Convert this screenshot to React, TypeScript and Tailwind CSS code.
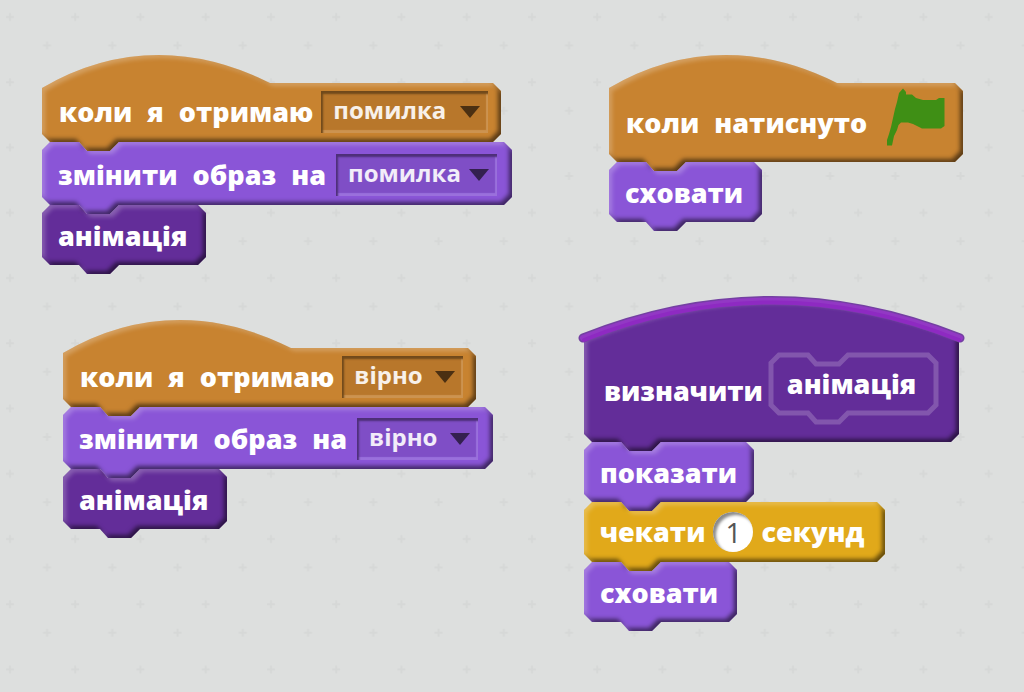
import React from "react";

type Tone = "orange" | "violet" | "indigo" | "gold";
type Shape = "hat" | "stack" | "define";

const FILL: Record<Tone, string> = {
  orange: "#c88330",
  violet: "#8a55d7",
  indigo: "#632d99",
  gold: "#e1a91a",
};

const SELECT_TONE = {
  orange: "bg-[#b8772b] shadow-[inset_3px_4px_2px_-1px_#70491b,inset_-3px_-4px_1px_-1px_#cc9350]",
  violet: "bg-[#7f4ec6] shadow-[inset_3px_4px_2px_-1px_#4d2f78,inset_-3px_-4px_1px_-1px_#9a70dc]",
};

const ARROW = { orange: "fill-[#4b3012]", violet: "fill-[#33204f]" };

function bottomEdge(w: number, h: number) {
  return `V${h - 8} L${w - 8} ${h} H77 L68 ${h + 9} H45 L37 ${h} H8 L0 ${h - 8} Z`;
}

function outline(shape: Shape, w: number, h: number) {
  if (shape === "hat") {
    return `M0 33 Q56 0 117 0 Q172 0 228 28 H${w - 8} L${w} 36 ${bottomEdge(w, h)}`;
  }
  if (shape === "define") {
    return `M0 42 Q${w / 2} -33 ${w} 42 ${bottomEdge(w, h)}`;
  }
  return `M0 8 L8 0 H37 L45 9 H68 L77 0 H${w - 8} L${w} 8 ${bottomEdge(w, h)}`;
}

function Bevels() {
  return (
    <svg className="absolute size-0" aria-hidden="true">
      <defs>
        <filter id="bevel" x="-5%" y="-10%" width="110%" height="130%" colorInterpolationFilters="sRGB">
          <feComponentTransfer in="SourceAlpha" result="outside">
            <feFuncA type="table" tableValues="1 0" />
          </feComponentTransfer>
          <feGaussianBlur in="outside" stdDeviation="2.2" result="soft" />
          <feOffset in="soft" dx="-3" dy="-3" result="low" />
          <feFlood floodColor="#000" floodOpacity="0.55" />
          <feComposite in2="low" operator="in" result="shadeAll" />
          <feOffset in="soft" dx="3" dy="3" result="high" />
          <feComposite in="shadeAll" in2="high" operator="out" result="shadeOnly" />
          <feComposite in="shadeOnly" in2="SourceAlpha" operator="in" result="shade" />
          <feFlood floodColor="#fff" floodOpacity="0.24" />
          <feComposite in2="high" operator="in" result="lightAll" />
          <feComposite in="lightAll" in2="low" operator="out" result="lightOnly" />
          <feComposite in="lightOnly" in2="SourceAlpha" operator="in" result="light" />
          <feMerge>
            <feMergeNode in="SourceGraphic" />
            <feMergeNode in="light" />
            <feMergeNode in="shade" />
          </feMerge>
        </filter>
      </defs>
    </svg>
  );
}

function Block({
  tone,
  shape = "stack",
  w,
  h,
  size,
  children,
}: {
  tone: Tone;
  shape?: Shape;
  w: number;
  h: number;
  size: string;
  children: React.ReactNode;
}) {
  return (
    <div className={`relative flex items-center ${size}`}>
      <svg
        className="absolute left-0 top-0 overflow-visible"
        width={w}
        height={h}
        viewBox={`0 0 ${w} ${h}`}
        aria-hidden="true"
      >
        <path d={outline(shape, w, h)} fill={FILL[tone]} filter="url(#bevel)" />
        {shape === "define" && (
          <g fill="none" strokeLinecap="round">
            <path d={`M-1 42 Q${w / 2} -33 ${w + 1} 42`} stroke="#7440a2" strokeWidth="9" />
            <path d={`M-1 42 Q${w / 2} -33 ${w + 1} 42`} stroke="#9238c4" strokeWidth="6" />
            <path d={`M0 44 Q${w / 2} -31 ${w} 44`} stroke="#8e2ac2" strokeWidth="4" />
          </g>
        )}
      </svg>
      {children}
    </div>
  );
}

function Words({ text }: { text: string }) {
  return (
    <span className="relative flex gap-[15px] whitespace-nowrap">
      {text.split(" ").map((word) => (
        <span key={word}>{word}</span>
      ))}
    </span>
  );
}

function Choice({ tone, value, size, label }: { tone: "orange" | "violet"; value: string; size: string; label: string }) {
  return (
    <span className={`relative flex h-[42px] items-center ${size}`}>
      <select
        aria-label={label}
        defaultValue={value}
        className={`h-full w-full appearance-none pb-1 pl-3 text-2xl font-bold text-white/90 outline-none ${SELECT_TONE[tone]}`}
      >
        <option>{value}</option>
      </select>
      <svg className={`pointer-events-none absolute right-2 h-3 w-5 ${ARROW[tone]}`} viewBox="0 0 20 12" aria-hidden="true">
        <path d="M0 0H20L10 12Z" />
      </svg>
    </span>
  );
}

function Flag() {
  return (
    <svg className="mb-3 ml-3 h-[58px] w-[58px] shrink-0 relative" viewBox="884 88 58 58" aria-hidden="true">
      <path
        fill="#3f8f15"
        d="M900 88.500L903 92V94.500H909L913 98L920 100H933L936 98H941.500V126L938 128.500H919L910 124L905 122.500H898L895.500 125L894 130L891 136L889 145.500H884V140L886 134L888 127L890 118L892 109L894 102L896 93Z"
      />
    </svg>
  );
}

function Dots() {
  return (
    <svg className="absolute inset-0 h-full w-full" aria-hidden="true">
      <defs>
        <pattern id="crosses" width="65.25" height="65.25" x="0" y="0" patternUnits="userSpaceOnUse">
          <path
            d="M43 45.500H51M47 41.500V49.500M6 17H14M10 13V21"
            stroke="#d6d8d7"
            strokeWidth="2"
          />
        </pattern>
      </defs>
      <rect width="100%" height="100%" fill="url(#crosses)" />
    </svg>
  );
}

export default function App() {
  return (
    <main className="relative min-h-screen w-full overflow-hidden bg-[#dddfde] font-['Open_Sans','Noto_Sans',sans-serif] text-[27px] leading-8 font-extrabold text-white">
      <Bevels />
      <Dots />

      <section className="absolute left-[42px] top-[55px] flex flex-col items-start">
        <Block tone="orange" shape="hat" w={459} h={87} size="h-[87px] w-[459px] gap-2 pt-[26px] pl-[17px]">
          <Words text="коли я отримаю" />
          <Choice tone="orange" value="помилка" size="w-[167px]" label="Повідомлення" />
        </Block>
        <Block tone="violet" w={470} h={63} size="h-[63px] w-[470px] gap-2.5 pl-4 pt-0.5">
          <Words text="змінити образ на" />
          <Choice tone="violet" value="помилка" size="w-[161px]" label="Образ" />
        </Block>
        <Block tone="indigo" w={164} h={60} size="h-[60px] w-[164px] pl-4 pt-0.5">
          <Words text="анімація" />
        </Block>
      </section>

      <section className="absolute left-[63px] top-[320px] flex flex-col items-start">
        <Block tone="orange" shape="hat" w={413} h={87} size="h-[87px] w-[413px] gap-2 pt-[26px] pl-[17px]">
          <Words text="коли я отримаю" />
          <Choice tone="orange" value="вірно" size="w-[121px]" label="Повідомлення" />
        </Block>
        <Block tone="violet" w={430} h={62} size="h-[62px] w-[430px] gap-2.5 pl-4 pt-0.5">
          <Words text="змінити образ на" />
          <Choice tone="violet" value="вірно" size="w-[121px]" label="Образ" />
        </Block>
        <Block tone="indigo" w={164} h={60} size="h-[60px] w-[164px] pl-4 pt-0.5">
          <Words text="анімація" />
        </Block>
      </section>

      <section className="absolute left-[609px] top-[55px] flex flex-col items-start">
        <Block tone="orange" shape="hat" w={354} h={107} size="h-[107px] w-[354px] gap-2 pt-7 pl-[17px]">
          <Words text="коли натиснуто" />
          <Flag />
        </Block>
        <Block tone="violet" w={153} h={60} size="h-[60px] w-[153px] pl-4 pt-0.5">
          <Words text="сховати" />
        </Block>
      </section>

      <section className="absolute left-[584px] top-[296px] flex flex-col items-start">
        <Block tone="indigo" shape="define" w={375} h={146} size="h-[146px] w-[375px] gap-2 pt-11 pl-5">
          <Words text="визначити" />
          <span className="relative mb-2 flex h-[64px] w-[170px] items-center pb-1.5 pl-4">
            <svg className="absolute left-0 top-0 overflow-visible" width="170" height="64" viewBox="0 0 170 64" aria-hidden="true">
              <path
                d={outline("stack", 165, 58)}
                fill="none"
                stroke="#8256ad"
                strokeWidth="5"
              />
            </svg>
            <Words text="анімація" />
          </span>
        </Block>
        <Block tone="violet" w={170} h={60} size="h-[60px] w-[170px] pl-4 pt-0.5">
          <Words text="показати" />
        </Block>
        <Block tone="gold" w={301} h={60} size="h-[60px] w-[301px] gap-2 pl-4">
          <Words text="чекати" />
          <input
            aria-label="Секунди"
            defaultValue="1"
            className="relative size-10 rounded-full bg-white text-center text-[28px] font-normal text-[#555] shadow-[inset_3px_3px_3px_#8a8a8a] outline-none"
          />
          <Words text="секунд" />
        </Block>
        <Block tone="violet" w={153} h={60} size="h-[60px] w-[153px] pl-4 pt-0.5">
          <Words text="сховати" />
        </Block>
      </section>
    </main>
  );
}
